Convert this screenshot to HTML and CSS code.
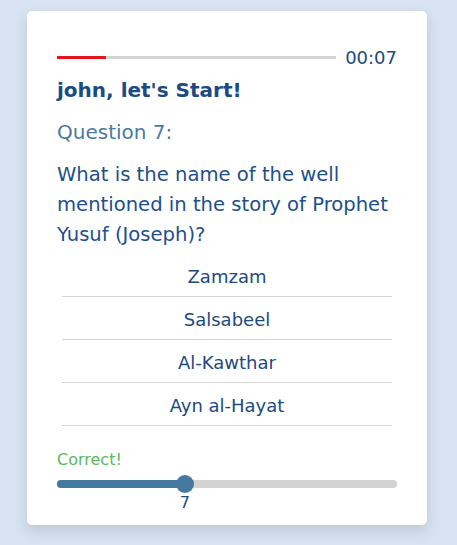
FILE: index.html
```html
<!DOCTYPE html>
<html lang="en">
<head>
<meta charset="utf-8">
<title>Quiz</title>
<link rel="stylesheet" href="styles.css">
</head>
<body>
<div class="card">
  <div class="timer-row">
    <div class="timer-track"><div class="timer-fill"></div></div>
    <span class="timer-text">00:07</span>
  </div>
  <h1 class="greeting">john, let's Start!</h1>
  <h2 class="qnum">Question 7:</h2>
  <p class="qtext">What is the name of the well mentioned in the story of Prophet Yusuf (Joseph)?</p>
  <ul class="options">
    <li class="option">Zamzam</li>
    <li class="option">Salsabeel</li>
    <li class="option">Al-Kawthar</li>
    <li class="option">Ayn al-Hayat</li>
  </ul>
  <div class="feedback">Correct!</div>
  <div class="slider">
    <div class="slider-track"><div class="slider-fill" style="width:37.6%"><span class="slider-thumb"></span></div></div>
    <div class="slider-label-row"><span class="slider-label" style="left:37.6%">7</span></div>
  </div>
</div>
</body>
</html>
```

FILE: styles.css
```css
* { box-sizing: border-box; }
html, body { margin: 0; padding: 0; }
body {
  background: #d7e3f1;
  font-family: "DejaVu Sans", sans-serif;
  padding: 11px 30px 17px 27px;
}
.card {
  width: 400px;
  background: #fff;
  border-radius: 5px;
  box-shadow: 0 6px 14px rgba(0,0,0,0.12);
  padding: 34px 30px 15px 30px;
}
.timer-row {
  display: flex;
  align-items: center;
  gap: 9px;
  height: 24px;
}
.timer-track {
  flex: 1;
  height: 3px;
  background: #d3d3d3;
}
.timer-fill {
  width: 49px;
  height: 100%;
  background: #e8141a;
}
.timer-text {
  font-size: 18px;
  color: #1d4a7c;
}
.greeting {
  margin: 6px 0 0;
  font-size: 20px;
  font-weight: bold;
  color: #1b4a85;
  line-height: 30px;
}
.qnum {
  margin: 13px 0 0;
  font-size: 20px;
  font-weight: normal;
  color: #4b7aa0;
  line-height: 28px;
}
.qtext {
  margin: 14px 0 0;
  font-size: 19.6px;
  line-height: 30px;
  color: #1d4f8d;
}
.options {
  list-style: none;
  margin: 4px 5px 0;
  padding: 0;
}
.option {
  height: 43px;
  display: flex;
  align-items: center;
  justify-content: center;
  font-size: 18px;
  color: #1d4a80;
  border-bottom: 1px solid #d4d4d4;
  padding-top: 2px;
}
.feedback {
  margin-top: 24px;
  font-size: 16px;
  color: #5cb85c;
  line-height: 20px;
}
.slider {
  margin-top: 10px;
}
.slider-track {
  height: 8px;
  border-radius: 4px;
  background: #d3d3d3;
}
.slider-fill {
  position: relative;
  height: 100%;
  border-radius: 4px;
  background: #45799f;
}
.slider-thumb {
  position: absolute;
  right: -9px;
  top: -5px;
  width: 18px;
  height: 18px;
  border-radius: 50%;
  background: #45799f;
}
.slider-label-row {
  position: relative;
  height: 22px;
}
.slider-label {
  position: absolute;
  top: 5px;
  transform: translateX(-50%);
  font-size: 16px;
  color: #1d4a80;
}
```
